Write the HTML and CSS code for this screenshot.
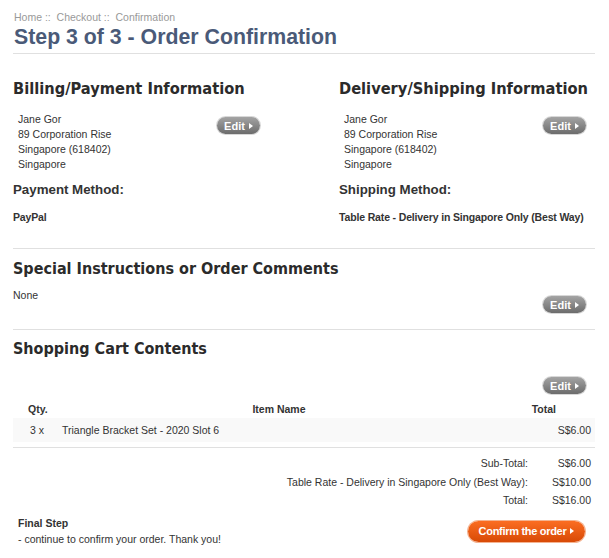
FILE: index.html
```html
<!DOCTYPE html>
<html>
<head>
<meta charset="utf-8">
<link rel="stylesheet" href="styles.css">
</head>
<body>
<div class="page">
  <div class="crumbs">Home :: &nbsp;Checkout :: &nbsp;Confirmation</div>
  <h1 class="title">Step 3 of 3 - Order Confirmation</h1>

  <div class="cols">
    <div class="col">
      <h2 class="sec">Billing/Payment Information</h2>
      <div class="addr-row">
        <address class="addr">Jane Gor<br>89 Corporation Rise<br>Singapore (618402)<br>Singapore</address>
        <span class="btn">Edit <svg class="arr" width="4" height="6" viewBox="0 0 4 6"><path d="M0 0L4 3L0 6Z" fill="#fff"/></svg></span>
      </div>
      <h3 class="method">Payment Method:</h3>
      <div class="method-val">PayPal</div>
    </div>
    <div class="col">
      <h2 class="sec">Delivery/Shipping Information</h2>
      <div class="addr-row">
        <address class="addr">Jane Gor<br>89 Corporation Rise<br>Singapore (618402)<br>Singapore</address>
        <span class="btn">Edit <svg class="arr" width="4" height="6" viewBox="0 0 4 6"><path d="M0 0L4 3L0 6Z" fill="#fff"/></svg></span>
      </div>
      <h3 class="method">Shipping Method:</h3>
      <div class="method-val">Table Rate - Delivery in Singapore Only (Best Way)</div>
    </div>
  </div>

  <div class="block comments">
    <h2 class="sec sec-c">Special Instructions or Order Comments</h2>
    <div class="note">None</div>
    <div class="btn-line"><span class="btn">Edit <svg class="arr" width="4" height="6" viewBox="0 0 4 6"><path d="M0 0L4 3L0 6Z" fill="#fff"/></svg></span></div>
  </div>

  <div class="block cartblock">
    <h2 class="sec sec-c">Shopping Cart Contents</h2>
    <div class="btn-line cart-edit"><span class="btn">Edit <svg class="arr" width="4" height="6" viewBox="0 0 4 6"><path d="M0 0L4 3L0 6Z" fill="#fff"/></svg></span></div>
    <div class="cart-wrap">
      <table class="cart">
        <thead>
          <tr><th class="c-qty">Qty.</th><th class="c-name">Item Name</th><th class="c-total">Total</th></tr>
        </thead>
        <tbody>
          <tr class="item"><td class="c-qty">3 x</td><td class="c-name">Triangle Bracket Set - 2020 Slot 6</td><td class="c-total">S$6.00</td></tr>
        </tbody>
      </table>
    </div>
    <div class="totals">
      <div class="trow"><span class="tl">Sub-Total:</span><span class="tv">S$6.00</span></div>
      <div class="trow"><span class="tl">Table Rate - Delivery in Singapore Only (Best Way):</span><span class="tv">S$10.00</span></div>
      <div class="trow"><span class="tl">Total:</span><span class="tv">S$16.00</span></div>
    </div>
  </div>

  <div class="final">
    <div class="final-text">
      <div class="final-title">Final Step</div>
      <div>- continue to confirm your order. Thank you!</div>
    </div>
    <span class="btn btn-go">Confirm the order <svg class="arr" width="4" height="6" viewBox="0 0 4 6"><path d="M0 0L4 3L0 6Z" fill="#fff"/></svg></span>
  </div>
</div>
</body>
</html>
```

FILE: styles.css
```css
body {
  margin: 0;
  background: #fff;
  font-family: "Liberation Sans", Arial, sans-serif;
  font-size: 10.5px;
  color: #333;
}
.page {
  padding: 10px 14px 0 13px;
}
.crumbs {
  color: #999;
  font-size: 10.5px;
  padding-left: 1px;
  line-height: 14px;
}
.title {
  margin: 0;
  font-size: 21.3px;
  line-height: 26px;
  color: #4a5a78;
  font-weight: bold;
  padding-left: 1px;
  padding-bottom: 3px;
  border-bottom: 1px solid #e0e0e0;
}
.cols {
  display: flex;
  justify-content: space-between;
  padding-top: 25px;
  padding-bottom: 24px;
  border-bottom: 1px solid #e0e0e0;
}
.col {
  width: 256px;
}
.sec {
  margin: 0;
  font-family: "DejaVu Sans Condensed", "DejaVu Sans", sans-serif;
  font-weight: bold;
  font-size: 16.3px;
  line-height: 20px;
  color: #2b2b2b;
  white-space: nowrap;
}
.sec-c {
  font-size: 16px;
}
.addr-row {
  display: flex;
  justify-content: space-between;
  align-items: flex-start;
  margin-top: 13px;
  padding-left: 5px;
  padding-right: 9px;
}
.addr {
  font-style: normal;
  line-height: 15px;
  color: #333;
}
.btn {
  display: inline-flex;
  align-items: center;
  justify-content: center;
  gap: 4px;
  height: 17px;
  width: 43px;
  box-sizing: border-box;
  border-radius: 9px;
  background: linear-gradient(#a4a4a4, #6c6c6c);
  box-shadow: 0 0 0 1px #d8d8d8;
  color: #fff;
  font-weight: bold;
  font-size: 11px;
}
.addr-row .btn {
  margin-top: 5px;
}
.arr {
  display: block;
}
.method {
  margin: 9px 0 0 0;
  font-size: 13.3px;
  line-height: 18px;
  font-weight: bold;
  color: #333;
}
.method-val {
  margin-top: 12px;
  font-weight: bold;
  font-size: 10.5px;
  letter-spacing: -0.15px;
  line-height: 13px;
}
.comments {
  padding-top: 10px;
  padding-bottom: 16px;
  border-bottom: 1px solid #e0e0e0;
}
.note {
  margin-top: 10px;
  font-size: 10.5px;
  line-height: 13px;
}
.btn-line {
  display: flex;
  justify-content: flex-end;
  padding-right: 9px;
}
.comments .btn-line {
  margin-top: -6px;
}
.cartblock {
  padding-top: 9px;
}
.cart-edit {
  margin-top: 18px;
}
.cart-wrap {
  margin-top: 7px;
  padding-bottom: 5px;
  border-bottom: 1px solid #e0e0e0;
}
.cart {
  width: 100%;
  border-collapse: collapse;
}
.cart th {
  font-weight: bold;
  height: 17px;
  padding: 0;
  line-height: 13px;
}
.cart td {
  height: 24px;
  padding: 0;
}
.item {
  background: #f9f9f9;
}
.cart th.c-qty {
  width: 32px;
  text-align: left;
  padding-left: 15px;
}
.cart td.c-qty {
  width: 32px;
  padding-left: 17px;
}
.cart .c-name {
  text-align: left;
}
.cart th.c-name {
  text-align: center;
}
.cart .c-total {
  text-align: right;
}
.cart th.c-total {
  width: 60px;
  padding-right: 39px;
}
.cart td.c-total {
  padding-right: 4px;
}
.totals {
  padding-top: 6px;
}
.trow {
  display: flex;
  justify-content: flex-end;
  line-height: 19px;
  height: 18.5px;
}
.tv {
  width: 63px;
  text-align: right;
  padding-right: 4px;
}
.final {
  display: flex;
  justify-content: space-between;
  align-items: flex-start;
  margin-top: 5px;
  padding-left: 5px;
  padding-right: 10px;
}
.final-text {
  line-height: 16px;
}
.final-title {
  font-weight: bold;
}
.btn-go {
  width: 117px;
  height: 21px;
  border-radius: 11px;
  margin-top: 6px;
  font-size: 11px;
  letter-spacing: -0.3px;
  background: linear-gradient(#fb6d22, #d84a06);
  box-shadow: 0 0 0 1px #f4b391;
}
```
